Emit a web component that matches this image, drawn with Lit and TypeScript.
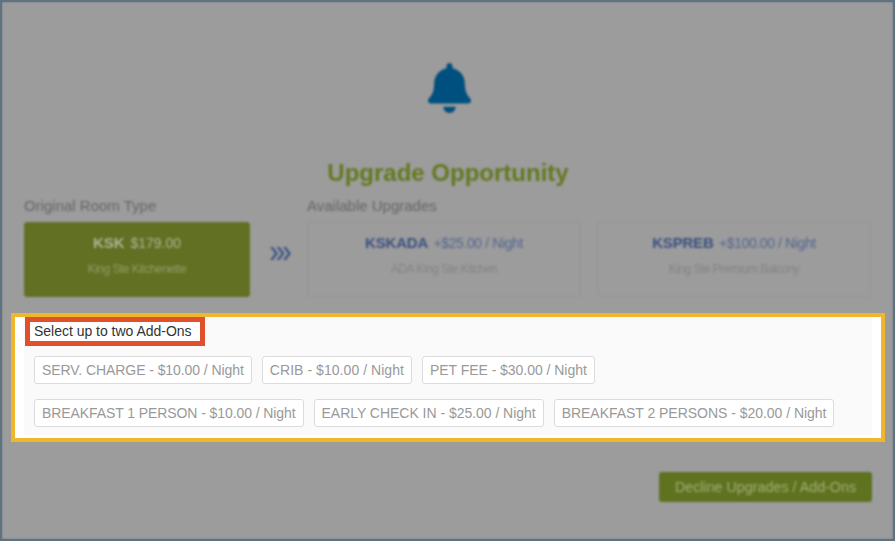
import { LitElement, html, css } from 'lit';
import { customElement } from 'lit/decorators.js';

const upgrades = [
  { code: 'KSKADA', price: '+$25.00 / Night', name: 'ADA King Ste Kitchen' },
  { code: 'KSPREB', price: '+$100.00 / Night', name: 'King Ste Premium Balcony' },
];

const addOnRows = [
  [
    { text: 'SERV. CHARGE - $10.00 / Night', tracking: -0.07 },
    { text: 'CRIB - $10.00 / Night', tracking: 0.05 },
    { text: 'PET FEE - $30.00 / Night', tracking: -0.04 },
  ],
  [
    { text: 'BREAKFAST 1 PERSON - $10.00 / Night', tracking: -0.085 },
    { text: 'EARLY CHECK IN - $25.00 / Night', tracking: -0.03 },
    { text: 'BREAKFAST 2 PERSONS - $20.00 / Night', tracking: -0.03 },
  ],
];

@customElement('app-root')
class AppRoot extends LitElement {
  static styles = css`
    :host {
      display: block;
      font-family: 'Liberation Sans', Arial, sans-serif;
    }

    .window {
      box-sizing: border-box;
      height: 541px;
      border: 2px solid #5f7280;
      background: #9c9c9c;
      box-shadow: inset 0 0 2px #5f7280;
      overflow: hidden;
    }

    .blurred {
      filter: blur(1.2px);
    }

    .top {
      padding: 61px 21px 0 22px;
    }

    .bell {
      display: block;
      width: 43px;
      height: 50px;
      margin: 0 auto;
      transform: translateX(1px);
      fill: #00507f;
    }

    h1 {
      margin: 46px 0 0;
      font-size: 24px;
      line-height: 28px;
      font-weight: bold;
      text-align: center;
      color: #64791f;
    }

    .rooms {
      display: flex;
      margin-top: 11px;
    }

    .original {
      width: 226px;
    }

    .arrows {
      box-sizing: border-box;
      display: flex;
      align-items: center;
      justify-content: center;
      width: 57px;
      padding: 11px 0 0 4px;
    }

    .arrows svg {
      width: 21px;
      height: 13px;
      fill: #3d5585;
    }

    .available {
      flex: 1;
    }

    .heading {
      font-size: 15px;
      line-height: 16px;
      color: #666;
      margin-bottom: 8px;
    }

    .cards {
      display: flex;
      gap: 16px;
      padding-right: 1px;
    }

    .card {
      box-sizing: border-box;
      flex: 1;
      height: 75px;
      padding-top: 10px;
      border: 1px solid #949494;
      border-radius: 3px;
      text-align: center;
    }

    .card.selected {
      background: #617022;
      border-color: #617022;
    }

    .price-line {
      font-size: 14px;
      line-height: 20px;
      letter-spacing: -0.4px;
      color: #54678f;
    }

    .price-line b {
      font-size: 15px;
      letter-spacing: -0.2px;
      margin-right: 2px;
      color: #3c5080;
    }

    .selected .price-line,
    .selected .price-line b {
      letter-spacing: 0;
      color: #aeb496;
    }

    .name {
      margin-top: 9px;
      font-size: 12px;
      line-height: 14px;
      letter-spacing: -0.5px;
      color: #848484;
    }

    .selected .name {
      color: #929c68;
    }

    .addons {
      margin: 16px 8px 0 9px;
      border: 4px solid #efb82c;
      background: #fff;
      padding: 0 9px 3px;
    }

    .addons-inner {
      background: #fafafa;
      padding-bottom: 8px;
    }

    .label {
      box-sizing: border-box;
      width: 180px;
      height: 29px;
      margin-left: 1px;
      padding-left: 4px;
      border: 5px solid #e0502b;
      background: #fff;
      font-size: 14px;
      letter-spacing: -0.02px;
      line-height: 19px;
      color: #333;
    }

    .chips {
      display: flex;
      gap: 10px;
      margin: 10px 0 0 10px;
    }

    .chips + .chips {
      margin-top: 15px;
    }

    .chip {
      box-sizing: border-box;
      height: 28px;
      padding: 0 7px;
      border: 1px solid #dcdcdc;
      border-radius: 3px;
      background: #fff;
      font-size: 14px;
      line-height: 26px;
      color: #999;
      white-space: nowrap;
    }

    .footer {
      display: flex;
      justify-content: flex-end;
      padding: 30px 21px 0 0;
    }

    .decline {
      box-sizing: border-box;
      width: 213px;
      height: 30px;
      border-radius: 3px;
      background: #5f7220;
      color: #a3af75;
      font-size: 14.3px;
      line-height: 30px;
      text-align: center;
    }
  `;

  render() {
    return html`
      <div class="window">
        <div class="top blurred">
          <svg class="bell" viewBox="0 0 448 512" preserveAspectRatio="none">
            <path d="M224 512c35.32 0 63.97-28.65 63.97-64H160.03c0 35.35 28.65 64 63.97 64zm215.39-149.71c-19.32-20.76-55.47-51.99-55.47-154.29 0-77.7-54.48-139.9-127.94-155.16V32c0-17.67-14.32-32-31.98-32s-31.98 14.33-31.98 32v20.84C118.56 68.1 64.08 130.3 64.08 208c0 102.3-36.15 133.53-55.47 154.29-6 6.45-8.66 14.16-8.61 21.71.11 16.4 12.98 32 32.1 32h383.8c19.12 0 32-15.6 32.1-32 .05-7.55-2.61-15.27-8.61-21.71z" />
          </svg>
          <h1>Upgrade Opportunity</h1>
          <div class="rooms">
            <div class="original">
              <div class="heading">Original Room Type</div>
              <div class="card selected">
                <div class="price-line"><b>KSK</b> $179.00</div>
                <div class="name">King Ste Kitchenette</div>
              </div>
            </div>
            <div class="arrows">
              <svg viewBox="0 0 21 14" preserveAspectRatio="none">
                <polygon points="0,0 3,0 8,7 3,14 0,14 5,7" />
                <polygon points="6.5,0 9.5,0 14.5,7 9.5,14 6.5,14 11.5,7" />
                <polygon points="13,0 16,0 21,7 16,14 13,14 18,7" />
              </svg>
            </div>
            <div class="available">
              <div class="heading">Available Upgrades</div>
              <div class="cards">
                ${upgrades.map(
                  (u) => html`
                    <div class="card">
                      <div class="price-line"><b>${u.code}</b> ${u.price}</div>
                      <div class="name">${u.name}</div>
                    </div>
                  `
                )}
              </div>
            </div>
          </div>
        </div>

        <div class="addons">
          <div class="addons-inner">
            <div class="label">Select up to two Add-Ons</div>
            ${addOnRows.map(
              (row) => html`
                <div class="chips">
                  ${row.map(
                    (a) => html`<div class="chip" style="letter-spacing: ${a.tracking}px">${a.text}</div>`
                  )}
                </div>
              `
            )}
          </div>
        </div>

        <div class="footer blurred">
          <div class="decline">Decline Upgrades / Add-Ons</div>
        </div>
      </div>
    `;
  }
}
